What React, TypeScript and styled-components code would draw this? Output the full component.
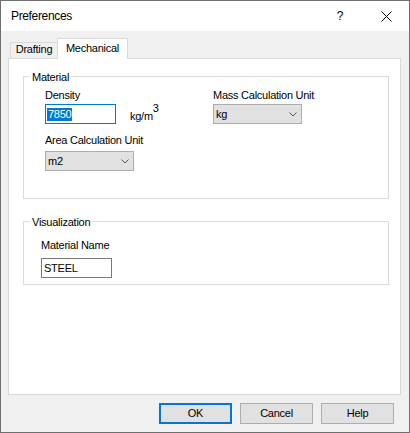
import React from "react";
import styled, { createGlobalStyle } from "styled-components";

const Global = createGlobalStyle`
  html, body { margin: 0; padding: 0; background: #fff; }
  body { font-family: "Liberation Sans", Arial, sans-serif; }
  * { box-sizing: border-box; }
`;

const Window = styled.div`
  width: 410px;
  height: 433px;
  border: 1px solid #707070;
  background: #f0f0f0;
  display: flex;
  flex-direction: column;
  font-family: "Liberation Sans", Arial, sans-serif;
  font-size: 11px;
  line-height: 13px;
  color: #000;
`;

const TitleBar = styled.div`
  height: 30px;
  flex: none;
  background: #fff;
  display: flex;
  align-items: center;
  padding-left: 10px;
`;

const Title = styled.div`
  flex: 1;
  font-size: 12px;
  letter-spacing: -0.35px;
  line-height: 14px;
`;

const CaptionButton = styled.div`
  width: 46px;
  height: 30px;
  display: flex;
  align-items: center;
  justify-content: center;
  font-size: 12px;
`;

const Body = styled.div`
  flex: 1;
  display: flex;
  flex-direction: column;
  padding: 7px 8px 0 7px;
  min-height: 0;
`;

const TabStrip = styled.div`
  height: 21px;
  flex: none;
  display: flex;
  align-items: flex-end;
  padding-left: 2px;
  margin-bottom: -1px;
  position: relative;
  z-index: 1;
`;

const Tab = styled.div<{ $active?: boolean }>`
  border: 1px solid #d9d9d9;
  border-bottom: none;
  display: flex;
  justify-content: center;
  align-items: flex-start;
  letter-spacing: -0.25px;
  width: ${(p) => (p.$active ? 71 : 48)}px;
  height: ${(p) => (p.$active ? 21 : 16)}px;
  padding-top: ${(p) => (p.$active ? 3 : 0)}px;
  margin-left: ${(p) => (p.$active ? -1 : 0)}px;
  margin-bottom: ${(p) => (p.$active ? 0 : 1)}px;
  background: ${(p) => (p.$active ? "#fff" : "#f0f0f0")};
`;

const Panel = styled.div`
  flex: 1;
  background: #fff;
  border: 1px solid #d9d9d9;
  padding: 17px 11px 0 14px;
  display: flex;
  flex-direction: column;
  letter-spacing: -0.25px;
`;

const Group = styled.div<{ $height: number; $gap?: number }>`
  border: 1px solid #dcdcdc;
  height: ${(p) => p.$height}px;
  margin-top: ${(p) => p.$gap ?? 0}px;
  display: flex;
  flex-direction: column;
`;

const Legend = styled.div`
  align-self: flex-start;
  margin: -6px 0 0 6px;
  padding: 0 2px;
  background: #fff;
  line-height: 13px;
`;

const MaterialGrid = styled.div`
  display: grid;
  grid-template-columns: 168px auto;
  padding-left: 21px;
  margin-top: 5px;
`;

const Column = styled.div`
  display: flex;
  flex-direction: column;
  align-items: flex-start;
`;

const VisContent = styled.div`
  display: flex;
  flex-direction: column;
  align-items: flex-start;
  padding-left: 17px;
  margin-top: 10px;
`;

const Label = styled.div<{ $top?: number }>`
  line-height: 13px;
  margin-top: ${(p) => p.$top ?? 0}px;
`;

const FieldRow = styled.div<{ $top?: number }>`
  display: flex;
  align-items: flex-start;
  margin-top: ${(p) => p.$top ?? 0}px;
`;

const TextBox = styled.div<{ $focused?: boolean; $top?: number }>`
  width: 71px;
  height: 20px;
  background: #fff;
  border: 1px solid ${(p) => (p.$focused ? "#0078d7" : "#7a7a7a")};
  display: flex;
  align-items: center;
  padding-left: ${(p) => (p.$focused ? 1 : 2)}px;
  margin-top: ${(p) => p.$top ?? 0}px;
`;

const Selection = styled.span`
  display: inline-block;
  background: #0078d7;
  color: #fff;
  padding: 0 1px;
  line-height: 13px;
`;

const Unit = styled.span`
  margin: 6px 0 0 14px;
  line-height: 13px;
`;

const Sup = styled.span`
  margin-top: -2px;
  line-height: 13px;
  font-size: 11px;
`;

const Select = styled.div<{ $top?: number }>`
  width: 89px;
  height: 20px;
  background: #e1e1e1;
  border: 1px solid #adadad;
  display: flex;
  align-items: center;
  justify-content: space-between;
  padding: 0 4px 0 2px;
  margin-top: ${(p) => p.$top ?? 0}px;
`;

const Footer = styled.div`
  height: 37px;
  flex: none;
  display: flex;
  justify-content: flex-end;
  align-items: flex-start;
  gap: 8px;
  padding: 8px 7px 0 0;
`;

const Button = styled.div<{ $default?: boolean }>`
  width: 73px;
  height: 21px;
  background: #e1e1e1;
  border: ${(p) => (p.$default ? "2px solid #0078d7" : "1px solid #adadad")};
  display: flex;
  align-items: center;
  justify-content: center;
  letter-spacing: -0.25px;
`;

const Chevron = () => (
  <svg width="8" height="5" viewBox="0 0 8 5">
    <polyline points="0.5,0.5 4,4 7.5,0.5" fill="none" stroke="#555" strokeWidth="1" />
  </svg>
);

const CloseIcon = () => (
  <svg width="11" height="11" viewBox="0 0 11 11">
    <path d="M0.5 0.5 L10.5 10.5 M10.5 0.5 L0.5 10.5" stroke="#000" strokeWidth="1" fill="none" />
  </svg>
);

export default function App() {
  return (
    <>
      <Global />
      <Window>
        <TitleBar>
          <Title>Preferences</Title>
          <CaptionButton>?</CaptionButton>
          <CaptionButton>
            <CloseIcon />
          </CaptionButton>
        </TitleBar>
        <Body>
          <TabStrip>
            <Tab>Drafting</Tab>
            <Tab $active>Mechanical</Tab>
          </TabStrip>
          <Panel>
            <Group $height={123}>
              <Legend>Material</Legend>
              <MaterialGrid>
                <Column>
                  <Label>Density</Label>
                  <FieldRow $top={2}>
                    <TextBox $focused>
                      <Selection>7850</Selection>
                    </TextBox>
                    <Unit>kg/m</Unit>
                    <Sup>3</Sup>
                  </FieldRow>
                  <Label $top={10}>Area Calculation Unit</Label>
                  <Select $top={4}>
                    <span>m2</span>
                    <Chevron />
                  </Select>
                </Column>
                <Column>
                  <Label>Mass Calculation Unit</Label>
                  <Select $top={2}>
                    <span>kg</span>
                    <Chevron />
                  </Select>
                </Column>
              </MaterialGrid>
            </Group>
            <Group $height={64} $gap={22}>
              <Legend>Visualization</Legend>
              <VisContent>
                <Label>Material Name</Label>
                <TextBox $top={6}>STEEL</TextBox>
              </VisContent>
            </Group>
          </Panel>
          <Footer>
            <Button $default>OK</Button>
            <Button>Cancel</Button>
            <Button>Help</Button>
          </Footer>
        </Body>
      </Window>
    </>
  );
}
